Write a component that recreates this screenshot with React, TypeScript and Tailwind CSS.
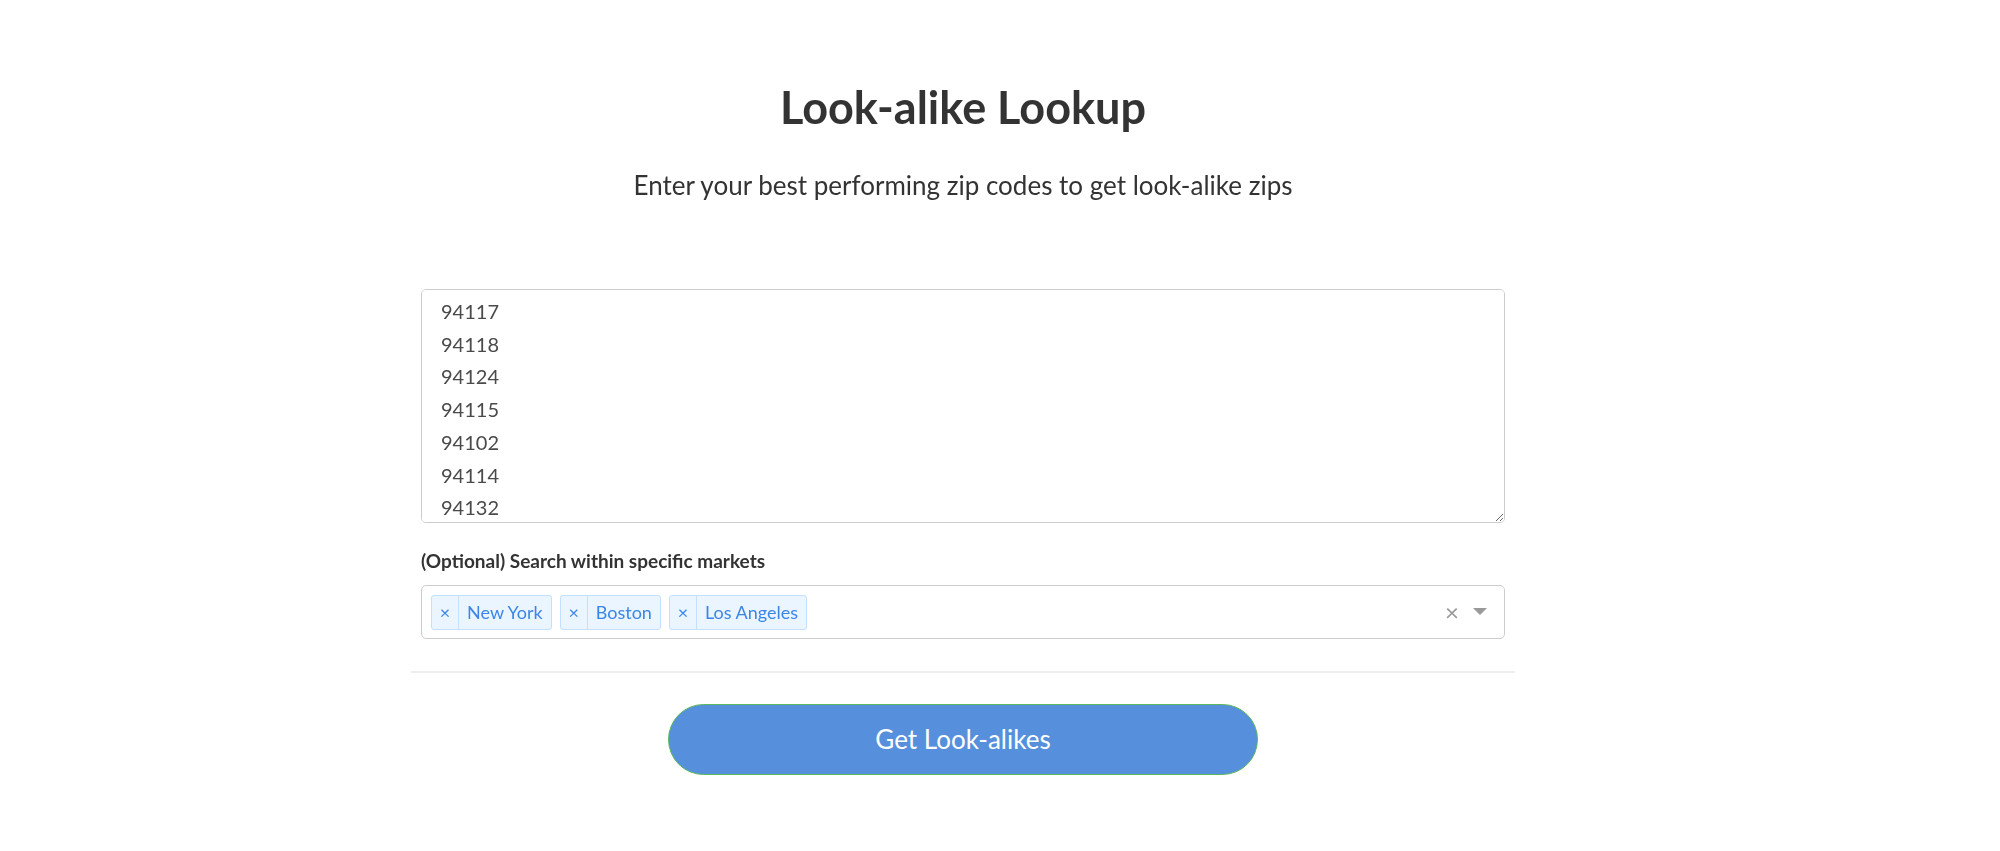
import React from "react";

const zips = ["94117", "94118", "94124", "94115", "94102", "94114", "94132", "94110"];
const markets = ["New York", "Boston", "Los Angeles"];

function Tag({ label }: { label: string }) {
  return (
    <div className="flex h-[35px] items-stretch rounded-[3px] border border-[#c2e0ff] bg-[#ebf5ff] text-[#3a86e8]">
      <span className="flex w-[27px] items-center justify-center border-r border-[#c2e0ff] text-[18px] leading-none">
        ×
      </span>
      <span className="flex items-center px-[8px] text-[18px]">{label}</span>
    </div>
  );
}

export default function App() {
  return (
    <div className="min-h-screen bg-white font-['Lato',sans-serif] text-[#333]">
      <div className="ml-[411px] w-[1104px] pt-[86px]">
        <h1 className="h-[42px] text-center text-[45px] font-bold leading-[42px] text-[#333]">
          Look-alike Lookup
        </h1>
        <p className="mt-[42px] text-center text-[26px] leading-[30px] text-[#333]">
          Enter your best performing zip codes to get look-alike zips
        </p>

        <div className="mt-[89px] px-[10px]">
          <textarea
            className="block h-[234px] w-full resize-y rounded-[5px] border border-[#cccccc] bg-white px-[19px] pt-[5px] text-[20px] leading-[32.7px] text-[#4a4a4a] outline-none"
            defaultValue={zips.join("\n")}
          />

          <div className="mt-[26px] text-[19px] font-bold leading-[24px] text-[#333]">
            (Optional) Search within specific markets
          </div>

          <div className="mt-[12px] flex h-[54px] items-center rounded-[5px] border border-[#cccccc] bg-white pl-[9px] pr-[17px]">
            <div className="flex flex-1 items-center gap-[8px]">
              {markets.map((m) => (
                <Tag key={m} label={m} />
              ))}
            </div>
            <span className="mr-[14px] text-[24px] leading-none text-[#999]">×</span>
            <svg width="14" height="8" viewBox="0 0 14 8">
              <path d="M0 0 L14 0 L7 7 Z" fill="#999" />
            </svg>
          </div>
        </div>

        <div className="mt-[32px] h-[2px] w-full bg-[#eeeeee]" />

        <div className="mt-[31px] flex justify-center">
          <button className="h-[71px] w-[590px] rounded-full border-[1.5px] border-[#5cb85c] bg-[#5690dc] text-[26px] text-white">
            Get Look-alikes
          </button>
        </div>
      </div>
    </div>
  );
}
